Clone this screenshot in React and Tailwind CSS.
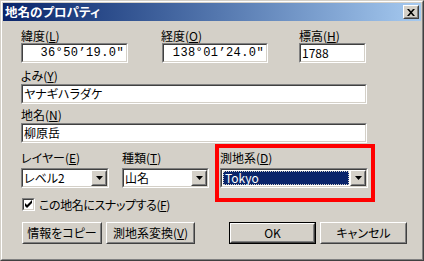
import React from 'react'

// Win2k style 3D borders
function Sunken({ className = '', children }) {
  return (
    <div className={`border border-t-[#808080] border-l-[#808080] border-b-white border-r-white ${className}`}>
      <div className="h-full border border-t-[#404040] border-l-[#404040] border-b-[#d4d0c8] border-r-[#d4d0c8] bg-white flex items-center overflow-hidden">
        {children}
      </div>
    </div>
  )
}

function Raised({ className = '', children }) {
  return (
    <div className={`border border-t-white border-l-white border-b-[#404040] border-r-[#404040] bg-[#d4d0c8] ${className}`}>
      <div className="h-full border border-t-[#d4d0c8] border-l-[#d4d0c8] border-b-[#808080] border-r-[#808080] flex items-center justify-center">
        {children}
      </div>
    </div>
  )
}

function Arrow() {
  return (
    <svg width="7" height="4" viewBox="0 0 7 4">
      <path d="M0 0h7L3.5 4z" fill="#000" />
    </svg>
  )
}

function Combo({ className = '', children }) {
  return (
    <Sunken className={className}>
      <div className="flex-1 h-full flex items-center pl-px">{children}</div>
      <Raised className="w-[16px] h-full shrink-0">
        <Arrow />
      </Raised>
    </Sunken>
  )
}

function Label({ children, className = '' }) {
  return <div className={`h-[13px] leading-[13px] text-[12px] whitespace-nowrap ${className}`}>{children}</div>
}

const U = ({ children }) => <span className="underline underline-offset-1">{children}</span>

export default function App() {
  return (
    <div className="w-[424px] h-[261px] border border-t-[#d4d0c8] border-l-[#d4d0c8] border-b-[#404040] border-r-[#404040] font-['Noto_Sans_CJK_JP',sans-serif] [font-feature-settings:'palt'] text-black">
      <div className="h-full border border-t-white border-l-white border-b-[#808080] border-r-[#808080] bg-[#d4d0c8] p-px flex flex-col">
        {/* Title bar */}
        <div className="h-[18px] shrink-0 bg-linear-to-r from-[#0a246a] to-[#a6caf0] flex items-center pl-[2px] pr-[2px]">
          <span className="flex-1 text-white font-bold text-[12.5px] leading-[18px]">地名のプロパティ</span>
          <Raised className="w-[16px] h-[14px]">
            <svg width="8" height="7" viewBox="0 0 8 7">
              <path d="M0 0h2l2 2.2L6 0h2L5 3.5 8 7H6L4 4.8 2 7H0l3-3.5z" fill="#000" />
            </svg>
          </Raised>
        </div>

        {/* Content */}
        <div className="pl-[18px] flex flex-col">
          {/* Row 1 */}
          <div className="flex mt-[8px]">
            <div className="w-[107px] flex flex-col">
              <Label>緯度(<U>L</U>)</Label>
              <Sunken className="mt-px h-[20px]">
                <span className="w-full text-right pr-[2px] font-['Liberation_Mono',monospace] text-[12px] tracking-[0.4px] leading-[14px]">36°50’19.0″</span>
              </Sunken>
            </div>
            <div className="w-[106px] ml-[34px] flex flex-col">
              <Label className="-ml-px">経度(<U>O</U>)</Label>
              <Sunken className="mt-px h-[20px]">
                <span className="w-full text-right pr-[2px] font-['Liberation_Mono',monospace] text-[12px] tracking-[0.4px] leading-[14px]">138°01’24.0″</span>
              </Sunken>
            </div>
            <div className="w-[67px] ml-[31px] flex flex-col">
              <Label>標高(<U>H</U>)</Label>
              <Sunken className="mt-px h-[20px]">
                <span className="pl-px text-[12px] leading-[14px]">1788</span>
              </Sunken>
            </div>
          </div>

          {/* よみ */}
          <Label className="mt-[6px]">よみ(<U>Y</U>)</Label>
          <Sunken className="mt-[2px] h-[20px] w-[346px]">
            <span className="pl-px text-[12px] leading-[14px]">ヤナギハラダケ</span>
          </Sunken>

          {/* 地名 */}
          <Label className="mt-[4px]">地名(<U>N</U>)</Label>
          <Sunken className="mt-[2px] h-[20px] w-[346px]">
            <span className="pl-px text-[12px] leading-[14px]">柳原岳</span>
          </Sunken>

          {/* Row 3 */}
          <div className="flex mt-[8px]">
            <div className="w-[88px] flex flex-col">
              <Label>レイヤー(<U>E</U>)</Label>
              <Combo className="mt-[4px] h-[20px]">
                <span className="text-[12px] leading-[14px]">レベル2</span>
              </Combo>
            </div>
            <div className="w-[87px] ml-[13px] flex flex-col">
              <Label>種類(<U>T</U>)</Label>
              <Combo className="mt-[4px] h-[20px]">
                <span className="text-[12px] leading-[14px]">山名</span>
              </Combo>
            </div>
            <div className="w-[148px] ml-[11px] flex flex-col relative">
              <Label>測地系(<U>D</U>)</Label>
              <Combo className="mt-[4px] h-[20px]">
                <div className="mr-px h-[14px] flex-1 bg-[#0a246a] outline-1 outline-dotted outline-[#d4d0c8] -outline-offset-1 flex items-center">
                  <span className="pl-[2px] text-white text-[12px] leading-[14px]">Tokyo</span>
                </div>
              </Combo>
              {/* red annotation frame */}
              <div className="absolute left-[-5px] top-[-7px] w-[160px] h-[58px] border-4 border-[#ff0000] pointer-events-none" />
            </div>
          </div>

          {/* Checkbox */}
          <div className="flex items-center mt-[10px] h-[13px] ml-px">
            <Sunken className="w-[13px] h-[13px] shrink-0">
              <svg width="9" height="9" viewBox="0 0 9 9" className="shrink-0">
                <path d="M1 3v3l2 2 5-5V0L3 5z" fill="#000" />
              </svg>
            </Sunken>
            <span className="ml-[4px] text-[12px] leading-[13px] tracking-[-0.4px]">この地名にスナップする(<U>F</U>)</span>
          </div>

          {/* Buttons */}
          <div className="flex mt-[11px] h-[22px]">
            <Raised className="w-[80px] h-full ml-px">
              <span className="text-[12px]">情報をコピー</span>
            </Raised>
            <Raised className="w-[89px] h-full ml-[4px]">
              <span className="text-[12px]">測地系変換(<U>V</U>)</span>
            </Raised>
            <div className="w-[87px] h-full ml-[34px] border border-black">
              <Raised className="h-full">
                <span className="text-[12px]">OK</span>
              </Raised>
            </div>
            <Raised className="w-[87px] h-full ml-[4px]">
              <span className="text-[12px]">キャンセル</span>
            </Raised>
          </div>
        </div>
      </div>
    </div>
  )
}
